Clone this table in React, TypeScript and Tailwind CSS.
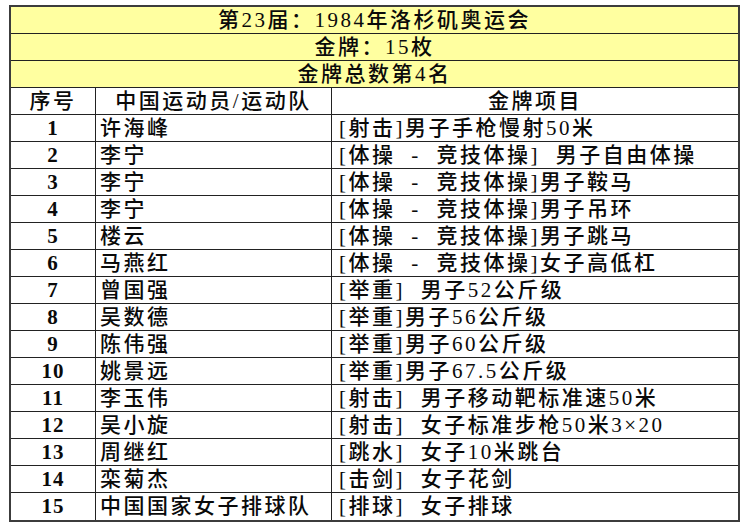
const rows: [string, string][] = [
  ['许海峰', '[射击]男子手枪慢射50米'],
  ['李宁', '[体操 - 竞技体操] 男子自由体操'],
  ['李宁', '[体操 - 竞技体操]男子鞍马'],
  ['李宁', '[体操 - 竞技体操]男子吊环'],
  ['楼云', '[体操 - 竞技体操]男子跳马'],
  ['马燕红', '[体操 - 竞技体操]女子高低杠'],
  ['曾国强', '[举重] 男子52公斤级'],
  ['吴数德', '[举重]男子56公斤级'],
  ['陈伟强', '[举重]男子60公斤级'],
  ['姚景远', '[举重]男子67.5公斤级'],
  ['李玉伟', '[射击] 男子移动靶标准速50米'],
  ['吴小旋', '[射击] 女子标准步枪50米3×20'],
  ['周继红', '[跳水] 女子10米跳台'],
  ['栾菊杰', '[击剑] 女子花剑'],
  ['中国国家女子排球队', '[排球] 女子排球'],
];

const banner = ['第23届：1984年洛杉矶奥运会', '金牌：15枚', '金牌总数第4名'];

export default function App() {
  return (
    <div className="w-[750px] h-[532px] bg-white pt-[5px] pl-[9px] text-[21px] leading-none tracking-[2.5px] text-[#0a0a0a] font-medium [word-spacing:8px] [font-family:'Liberation_Serif','Noto_Sans_CJK_SC',serif]">
      <div className="w-[731px] border-2 border-[#3c3c3c]">
        {banner.map((t) => (
          <div key={t} className="h-[27px] bg-[#ffffa0] border-b border-[#222] flex items-center justify-center">
            {t}
          </div>
        ))}
        <div className="grid grid-cols-[85px_236px_1fr] h-[27px] border-b border-[#222]">
          <div className="border-r border-[#222] flex items-center justify-center">序号</div>
          <div className="border-r border-[#222] flex items-center justify-center">中国运动员/运动队</div>
          <div className="flex items-center justify-center">金牌项目</div>
        </div>
        {rows.map(([name, event], i) => (
          <div
            key={i}
            className={`grid grid-cols-[85px_236px_1fr] h-[27px] ${i < rows.length - 1 ? 'border-b border-[#222]' : ''}`}
          >
            <div className="border-r border-[#222] flex items-center justify-center font-bold tracking-[1px]">{i + 1}</div>
            <div className="border-r border-[#222] flex items-center pl-[4px]">{name}</div>
            <div className="flex items-center pl-[7px]">{event}</div>
          </div>
        ))}
      </div>
    </div>
  );
}
